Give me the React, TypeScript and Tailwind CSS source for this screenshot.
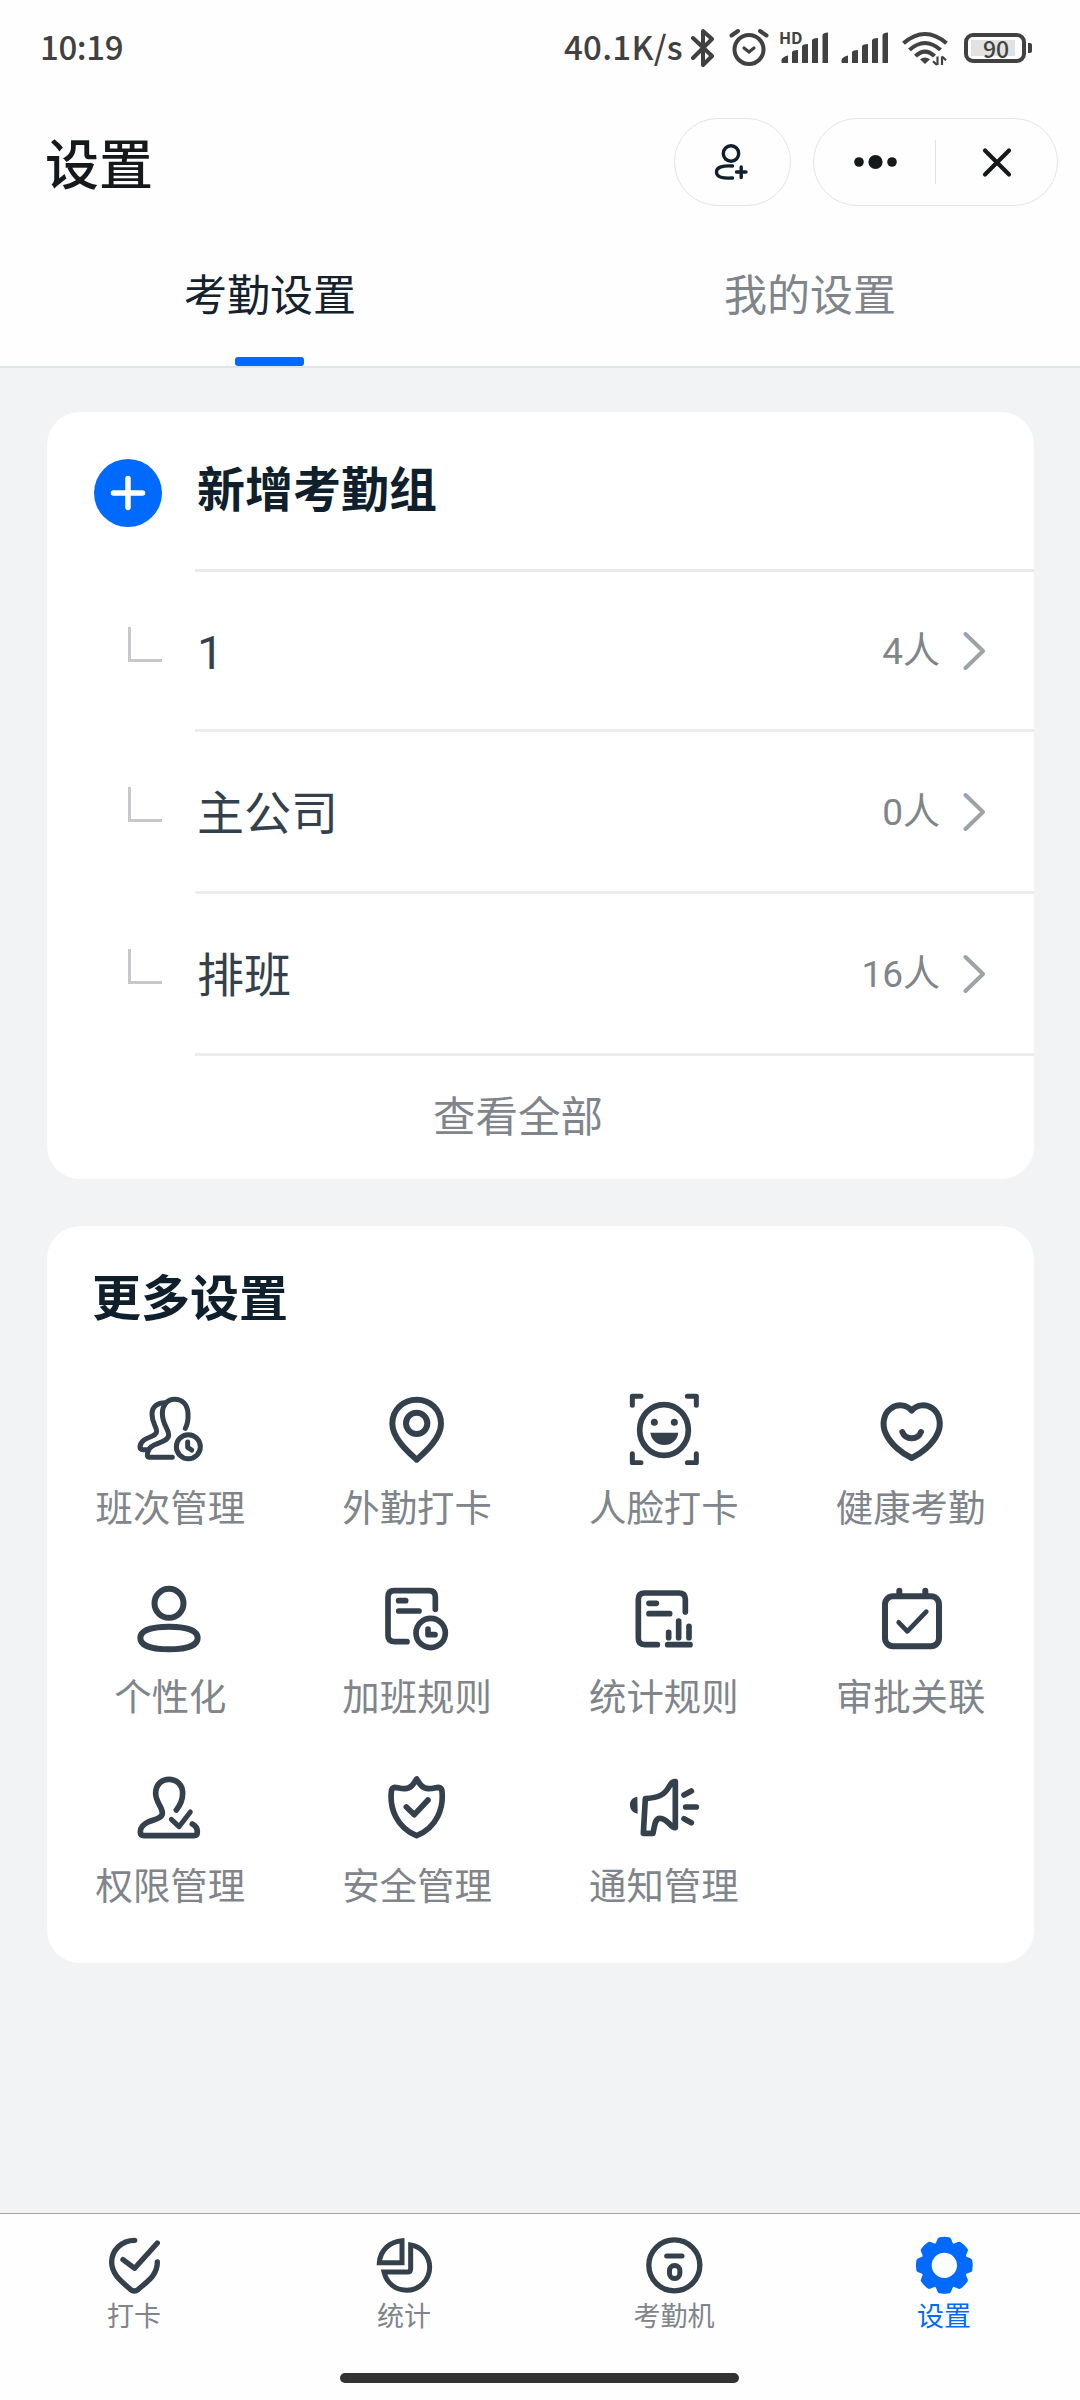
import { ReactNode, useState } from "react";

type TGroupProps = { name: string; count: number; height: string };
type TMenuProps = { label: string; icon: ReactNode };

const groups: TGroupProps[] = [
  { name: "1", count: 4, height: "h-[160px]" },
  { name: "主公司", count: 0, height: "h-[162px]" },
  { name: "排班", count: 16, height: "h-[162px]" },
];

const menus: TMenuProps[][] = [
  [
    {
      label: "班次管理",
      icon: (
        <>
          <path d="M154 106C160 95 163 80 162 61C160 35 145 19 122 19C99 19 85 37 85 61C85 95 104 108 104 125C104 143 80 147 62 155C48 161 40 172 40 186Q40 193 47 193H115" />
          <path d="M95 29C73 28 54 40 54 63C54 93 68 100 68 115C68 130 45 130 30 141C20 148 18 158 18 163Q19 170 28 170H44" />
          <circle cx="163" cy="161" r="36" />
          <path d="M161 147V163L173 171" />
        </>
      ),
    },
    {
      label: "外勤打卡",
      icon: (
        <g strokeWidth="18">
          <path d="M107 200C85 180 34 137 34 92C34 50 67 20 107 20C147 20 180 50 180 92C180 137 129 180 107 200Z" />
          <circle cx="107" cy="91" r="32" />
        </g>
      ),
    },
    {
      label: "人脸打卡",
      icon: (
        <>
          <path d="M39 10H13V37M178 10H205V37M13 182V209H39M205 182V209H178" />
          <ellipse cx="108" cy="111" rx="73" ry="76" strokeWidth="17" />
          <g fill="currentColor" stroke="none">
            <circle cx="79" cy="88" r="10.5" />
            <circle cx="139" cy="88" r="10.5" />
            <path d="M67 119H151C148 142 130 156 109 156C88 156 70 142 67 119Z" />
          </g>
        </>
      ),
    },
    {
      label: "健康考勤",
      icon: (
        <g strokeWidth="18">
          <path d="M110 53C94 33 66 33 48 46C25 62 20 95 32 121C47 155 82 182 110 195C138 182 173 155 188 121C200 95 195 62 172 46C154 33 126 33 110 53Z" />
          <path d="M82 117C92 142 128 142 138 117" />
        </g>
      ),
    },
  ],
  [
    {
      label: "个性化",
      icon: (
        <g strokeWidth="18">
          <circle cx="105" cy="64" r="43.5" />
          <path d="M105 134C150 134 191 143 191 168C191 193 150 202 105 202C60 202 19 193 19 168C19 143 60 134 105 134Z" />
        </g>
      ),
    },
    {
      label: "加班规则",
      icon: (
        <g strokeWidth="17">
          <path d="M163 82V45Q163 26 144 26H40Q21 26 21 45V160Q21 179 40 179H78" />
          <path d="M53 56H74M53 87H114" />
          <circle cx="149" cy="153" r="44" />
          <path d="M141 141V158H162" />
        </g>
      ),
    },
    {
      label: "统计规则",
      icon: (
        <g strokeWidth="17">
          <path d="M172 90V52Q172 33 153 33H50Q31 33 31 52V169Q31 188 50 188H88" />
          <path d="M63 64H85M63 95H125" />
          <path d="M122 151V167M152 117V167M183 133V167M119 188H186" />
        </g>
      ),
    },
    {
      label: "审批关联",
      icon: (
        <g strokeWidth="18">
          <rect x="30" y="43" width="162" height="150" rx="24" />
          <path d="M73 26V42M151 26V42" />
          <path d="M71 121L97 148L154 89" strokeWidth="14" />
        </g>
      ),
    },
  ],
  [
    {
      label: "权限管理",
      icon: (
        <g strokeWidth="17">
          <path d="M127 117C140 101 146 88 146 67C146 42 129 25 105 25C81 25 65 42 65 67C65 95 86 108 85 127C84 142 62 145 45 152C28 159 19 168 19 183Q19 194 30 194H180Q190 194 190 183C190 172 185 164 175 159" />
          <path d="M112 145L135 167L169 123" strokeWidth="15" />
        </g>
      ),
    },
    {
      label: "安全管理",
      icon: (
        <g strokeWidth="17">
          <path d="M107 24C97 40 90 52 72 53C58 54 52 49 41 49Q32 50 31 62C26 110 45 168 107 194C169 168 188 110 183 62Q182 50 173 49C162 49 156 54 142 53C124 52 117 40 107 24Z" />
          <path d="M76 108L100 131L141 87" />
        </g>
      ),
    },
    {
      label: "通知管理",
      icon: (
        <g strokeWidth="17">
          <path d="M52 83C95 80 110 70 124 46C130 36 132 32 142 32V170C128 172 120 142 96 142C80 142 80 165 75 187H46Z" />
          <path d="M168 72L190 60M173 108H205M168 143L190 155" />
          <path d="M28 77C10 80 5 92 6 104C7 117 16 125 29 128Z" fill="currentColor" stroke="none" />
        </g>
      ),
    },
  ],
];

const navs: TMenuProps[] = [
  {
    label: "打卡",
    icon: (
      <g strokeWidth="16">
        <path d="M89 16C50 16 20 45 20 82C20 118 50 140 76 163Q88 173 100 163C126 140 157 122 157 81" />
        <path d="M54 74L89 100L157 24" />
      </g>
    ),
  },
  {
    label: "统计",
    icon: (
      <g strokeLinejoin="miter">
        <path d="M81 17V83H13C15 47 45 19 81 17Z" />
        <path d="M107 30V101Q107 111 97 111H27C35 145 62 166 95 166C133 166 164 135 164 97C164 63 140 35 107 30Z" />
      </g>
    ),
  },
  {
    label: "考勤机",
    icon: (
      <>
        <circle cx="88" cy="91" r="76.5" strokeWidth="16" />
        <path d="M65 63H111" />
        <rect x="73.5" y="91.5" width="31" height="39" rx="15" strokeWidth="15" />
      </>
    ),
  },
  {
    label: "设置",
    icon: (
      <g transform="translate(88 91)">
        <circle r="53" strokeWidth="30" />
        {[0, 45, 90, 135, 180, 225, 270, 315].map((deg) => (
          <path
            key={deg}
            d="M-33 -59C-20 -66 -24 -84 -13 -84Q0 -87 13 -84C24 -84 20 -66 33 -59Z"
            transform={`rotate(${deg})`}
            fill="currentColor"
            stroke="none"
          />
        ))}
      </g>
    ),
  },
];

function LineIcon({ size, box, children }: { size: string; box: number; children: ReactNode }) {
  return (
    <svg
      className={size}
      viewBox={`0 0 ${box} ${box}`}
      fill="none"
      stroke="currentColor"
      strokeWidth="15"
      strokeLinecap="round"
      strokeLinejoin="round"
    >
      {children}
    </svg>
  );
}

function Signal() {
  return (
    <svg className="w-12 h-8" viewBox="0 0 48 32" fill="currentColor">
      <path d="M0.5 28Q1 25 7 23.5V31H1.5Q0.5 31 0.5 30Z" />
      <path d="M11 20Q12 18 17 18V31H11Z" />
      <path d="M21 14Q22 12 27 12V31H21Z" />
      <path d="M31 8Q32 6 37 6V31H31Z" />
      <path d="M41.5 3Q42 0.5 47 0.5V31H41.5Z" />
    </svg>
  );
}

function StatusBar() {
  return (
    <div className="h-[96px] flex items-center justify-between pl-[40px] pr-[48px] text-[#414141] text-[33px] leading-[48px] font-medium font-['Noto_Sans_CJK_SC',sans-serif]">
      <div className="mb-[4px] tracking-[-0.4px]">10:19</div>
      <div className="flex items-center">
        <div className="mb-[4px] tracking-[0.3px]">40.1K/s</div>
        <svg className="w-6 h-10 ml-[8px]" viewBox="0 0 24 40" fill="none" stroke="currentColor" strokeWidth="4" strokeLinejoin="round" strokeLinecap="round">
          <path d="M2 10L21 28L12 37V3L21 11L2 30" />
        </svg>
        <svg className="w-10 h-10 ml-[14px]" viewBox="0 0 40 40" fill="none" stroke="currentColor" strokeWidth="4" strokeLinecap="round">
          <circle cx="20" cy="21.500" r="14.500" />
          <path d="M2.500 7.500L9 3M37.500 7.500L31 3" />
          <path d="M15 20L20 24L25 20" strokeWidth="3.200" />
        </svg>
        <div className="relative ml-[12px] flex">
          <Signal />
          <span className="absolute -left-[2px] -top-[5px] text-[16px] leading-[20px] font-semibold">HD</span>
        </div>
        <div className="ml-[12px] flex">
          <Signal />
        </div>
        <svg className="w-[47px] h-[36px] ml-[13px]" viewBox="0 0 47 38" preserveAspectRatio="none" fill="none" stroke="currentColor" strokeWidth="4.200">
          <path d="M1.500 14Q23 -5.500 44.500 14" />
          <path d="M7.500 21Q23 6.500 38.500 21" />
          <path d="M13.500 27.500Q23 18 32.500 27.500" />
          <path d="M18 31Q23 27 28 31L23 36Z" fill="currentColor" stroke="none" />
          <path d="M35.500 28V37M40 28V37" strokeWidth="2.200" />
          <path d="M31 33L35 37M40 28L44 32" strokeWidth="2.200" />
        </svg>
        <div className="flex items-center ml-[15px]">
          <div className="w-[62px] h-[30px] rounded-[9px] border-4 border-[#414141] p-[3px] flex">
            <div className="w-[44px] h-full bg-[#e2e2e2] flex items-center justify-center pl-[6px] text-[23px] leading-[17px]">
              90
            </div>
          </div>
          <div className="w-[4px] h-[10px] ml-[2px] rounded-r-[2px] bg-[#414141]" />
        </div>
      </div>
    </div>
  );
}

function TitleBar() {
  return (
    <div className="h-[132px] flex items-center justify-between pl-[45px] pr-[22px] text-[#16191c]">
      <h1 className="text-[54px] leading-[80px] pt-[9px] font-medium">设置</h1>
      <div className="flex gap-[22px]">
        <button className="w-[117px] h-[88px] rounded-full border border-[#e3e4e5] flex items-center justify-center pr-[3px]">
          <svg className="w-[36px] h-[38px]" viewBox="0 0 36 38" fill="none" stroke="#0f1f2c" strokeWidth="3.400" strokeLinecap="round">
            <circle cx="18" cy="10.500" r="7.700" />
            <path d="M19.500 23C10 22.500 3.500 24 3.500 29C3.500 34.500 10 35.500 19.500 35" />
            <path d="M23.500 29H33M28.200 24V34.500" />
          </svg>
        </button>
        <div className="w-[245px] h-[88px] rounded-full border border-[#e3e4e5] flex items-center">
          <button className="flex-1 flex justify-center">
            <svg className="w-[44px] h-[16px]" viewBox="0 0 44 16" fill="currentColor">
              <circle cx="6" cy="8" r="4.800" />
              <circle cx="22.500" cy="8" r="7.100" />
              <circle cx="39" cy="8" r="4.800" />
            </svg>
          </button>
          <div className="w-px h-[44px] bg-[#dfe1e2]" />
          <button className="flex-1 flex justify-center">
            <svg className="w-[32px] h-[32px]" viewBox="0 0 32 32" fill="none" stroke="currentColor" strokeWidth="4.200" strokeLinecap="round">
              <path d="M4 4.500L28 28.500M28 4.500L4 28.500" />
            </svg>
          </button>
        </div>
      </div>
    </div>
  );
}

export default function App() {
  const [tab, setTab] = useState("考勤设置");

  return (
    <div className="w-[1080px] h-[2400px] flex flex-col bg-[#f1f3f5] font-[Roboto,'Noto_Sans_CJK_SC',sans-serif]">
      <div className="bg-[#fefefe]">
        <StatusBar />
        <TitleBar />
        {/* 标签页 */}
        <div className="h-[140px] flex border-b-2 border-[#e2e5e6]">
          {["考勤设置", "我的设置"].map((item) => (
            <button
              key={item}
              onClick={() => setTab(item)}
              className="flex-1 flex flex-col items-center justify-between pt-[38px]"
            >
              <span
                className={`text-[43px] leading-[60px] ${tab === item ? "text-[#15222c]" : "text-[#7f858a]"}`}
              >
                {item}
              </span>
              {tab === item && <span className="w-[69px] h-[9px] mr-[2px] rounded-[3px] bg-[#006aff]" />}
            </button>
          ))}
        </div>
      </div>

      <div className="flex-1 pt-[44px] pl-[47px] pr-[46px]">
        {/* 考勤组 */}
        <section className="h-[767px] rounded-[33px] bg-white">
          <div className="h-[160px] flex">
            <div className="w-[148px] pl-[47px] pt-[47px]">
              <div className="w-[68px] h-[68px] rounded-full bg-[#006aff] flex items-center justify-center">
                <svg className="w-[36px] h-[36px]" viewBox="0 0 36 36" stroke="#fff" strokeWidth="5.500" strokeLinecap="round">
                  <path d="M3.500 18H32.500M18 3.500V32.500" />
                </svg>
              </div>
            </div>
            <div className="flex-1 pt-[44px] pl-[2px] border-b-[3px] border-[#e6e8ea]">
              <h2 className="text-[48px] leading-[70px] font-bold text-[#0f1f2c]">新增考勤组</h2>
            </div>
          </div>
          {groups.map((group) => (
            <div key={group.name} className={`flex ${group.height}`}>
              <div className="w-[148px] pl-[81px] pt-[55px]">
                <div className="w-[34px] h-[35px] border-l-[3px] border-b-[3px] border-[#c6c8cb]" />
              </div>
              <div className="flex-1 flex items-center pl-[2px] pr-[49px] border-b-[3px] border-[#ebedee]">
                <span className="flex-1 pt-[5px] text-[47px] leading-[70px] text-[#34414c]">{group.name}</span>
                <span className="pt-[3px] text-[37px] leading-[56px] text-[#7f858a]">{group.count}人</span>
                <svg className="w-[22px] h-[40px] ml-[23px]" viewBox="0 0 22 40" fill="none" stroke="#9ea3a7" strokeWidth="4" strokeLinecap="round" strokeLinejoin="round">
                  <path d="M2.500 3L20 20L2.500 37" />
                </svg>
              </div>
            </div>
          ))}
          <button className="w-full h-[123px] pr-[45px] text-[42.5px] text-[#7f858a]">查看全部</button>
        </section>

        {/* 更多设置 */}
        <section className="h-[737px] mt-[47px] rounded-[33px] bg-white">
          <h2 className="h-[167px] pl-[45px] pt-[39px] text-[49px] leading-[70px] font-bold text-[#0f1f2c]">更多设置</h2>
          {menus.map((row, i) => (
            <div key={i} className="h-[189px] grid grid-cols-4">
              {row.map((menu) => (
                <button key={menu.label} className="flex flex-col items-center text-[#34414c]">
                  <LineIcon size="w-[72px] h-[72px]" box={216}>
                    {menu.icon}
                  </LineIcon>
                  <span className="mt-[19px] text-[37.4px] leading-[50px] text-[#7f858a]">{menu.label}</span>
                </button>
              ))}
            </div>
          ))}
        </section>
      </div>

      {/* 底部导航 */}
      <nav className="h-[187px] bg-[#fefefe] border-t border-[#a0a6ab] flex flex-col items-center">
        <div className="w-full grid grid-cols-4 pt-[21px]">
          {navs.map((nav) => (
            <button
              key={nav.label}
              className={`flex flex-col items-center ${nav.label === "设置" ? "text-[#006aff]" : "text-[#34414c]"}`}
            >
              <LineIcon size="w-[60px] h-[60px]" box={180}>
                {nav.icon}
              </LineIcon>
              <span
                className={`mt-[2px] pr-[2px] text-[27px] leading-[40px] ${nav.label === "设置" ? "text-[#006aff]" : "text-[#7f858a]"}`}
              >
                {nav.label}
              </span>
            </button>
          ))}
        </div>
        <div className="w-[399px] h-[10px] mt-[36px] mr-px rounded-full bg-[#333]" />
      </nav>
    </div>
  );
}
